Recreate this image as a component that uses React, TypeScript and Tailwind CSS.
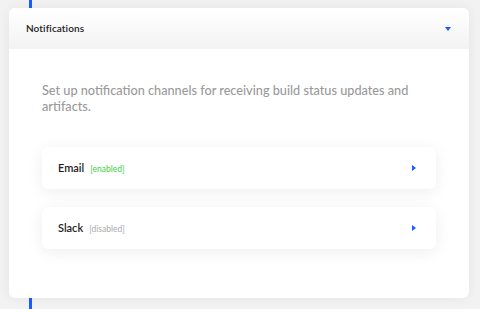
export default function App() {
  const channels = [
    { name: "Email", status: "enabled" },
    { name: "Slack", status: "disabled" },
  ];

  return (
    <div
      className="relative w-[480px] h-[309px] bg-[#f2f2f2] overflow-hidden pt-2 pl-[9px] pr-[11px]"
      style={{ fontFamily: "Lato, 'Open Sans', sans-serif" }}
    >
      {/* timeline line behind the card */}
      <div className="absolute left-[29px] top-0 h-full w-[3px] bg-[#1a5cff]" />
      <div className="relative h-[290px] bg-white rounded-md shadow-[0_0_12px_rgba(0,0,0,0.06)] overflow-hidden flex flex-col">
        <div className="h-[41px] flex items-center justify-between pl-[17px] pr-[18px] bg-gradient-to-b from-white to-[#f3f3f3]">
          <span className="text-[10px] font-semibold text-[#222] tracking-[0.1px]">Notifications</span>
          <span className="w-0 h-0 border-l-[3.5px] border-r-[3.5px] border-t-[4px] border-l-transparent border-r-transparent border-t-[#1a5cff]" />
        </div>
        <div className="px-[33px] pt-[33px]">
          <p className="text-[12.7px] leading-[16px] text-[#9a9a9a] font-medium">
            Set up notification channels for receiving build status updates and artifacts.
          </p>
          <div className="mt-[33px] flex flex-col gap-[18px]">
            {channels.map((c) => (
              <div
                key={c.name}
                className="h-[42px] bg-white rounded-md shadow-[0_3px_16px_rgba(0,0,0,0.07)] flex items-center justify-between pl-4 pr-[20px]"
              >
                <div className="flex items-baseline gap-[6px]">
                  <span className="text-[11px] font-semibold text-[#222]">{c.name}</span>
                  <span
                    className={
                      c.status === "enabled"
                        ? "text-[8.5px] text-[#3fd13f]"
                        : "text-[8.5px] text-[#aaa]"
                    }
                  >
                    [{c.status}]
                  </span>
                </div>
                <span className="w-0 h-0 border-t-[3.5px] border-b-[3.5px] border-l-[4px] border-t-transparent border-b-transparent border-l-[#1a5cff]" />
              </div>
            ))}
          </div>
        </div>
      </div>
    </div>
  );
}
